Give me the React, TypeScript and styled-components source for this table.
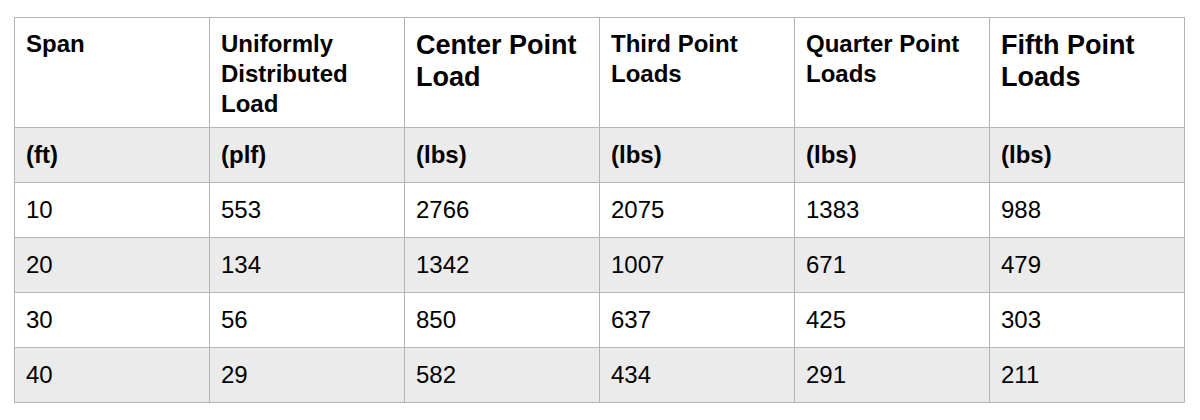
import React from "react";
import styled, { createGlobalStyle } from "styled-components";

const Global = createGlobalStyle`
  html, body {
    margin: 0;
    padding: 0;
    background: #ffffff;
  }
  body {
    font-family: "Liberation Sans", Arial, Helvetica, sans-serif;
    color: #000000;
  }
`;

const Page = styled.div`
  padding: 17px 15px 0 14px;
`;

const Table = styled.table`
  border-collapse: collapse;
  table-layout: fixed;
  width: 1171px;
  font-family: "Liberation Sans", Arial, Helvetica, sans-serif;
`;

const Col = styled.col`
  width: 195px;
`;

const Row = styled.tr<{ $shaded?: boolean; $tall?: boolean }>`
  height: ${(p) => (p.$tall ? "110px" : "55px")};
  background: ${(p) => (p.$shaded ? "#ebebeb" : "#ffffff")};
`;

const HeadCell = styled.th<{ $big?: boolean }>`
  border: 1px solid #b4b4b4;
  padding: 11px 11px 0;
  text-align: left;
  vertical-align: top;
  font-weight: 700;
  font-size: ${(p) => (p.$big ? "27px" : "24px")};
  line-height: ${(p) => (p.$big ? "32.4px" : "30px")};
  color: #000;
`;

const UnitCell = styled.td`
  border: 1px solid #b4b4b4;
  padding: 0 11px;
  vertical-align: middle;
  font-weight: 700;
  font-size: 24px;
  line-height: 1.2;
  color: #000;
`;

const Cell = styled.td`
  border: 1px solid #b4b4b4;
  padding: 0 11px;
  vertical-align: middle;
  font-weight: 400;
  font-size: 24px;
  line-height: 1.2;
  color: #000;
`;

const headers: { label: string; big?: boolean }[] = [
  { label: "Span" },
  { label: "Uniformly Distributed Load" },
  { label: "Center Point Load", big: true },
  { label: "Third Point Loads" },
  { label: "Quarter Point Loads" },
  { label: "Fifth Point Loads", big: true },
];

const units = ["(ft)", "(plf)", "(lbs)", "(lbs)", "(lbs)", "(lbs)"];

const rows: string[][] = [
  ["10", "553", "2766", "2075", "1383", "988"],
  ["20", "134", "1342", "1007", "671", "479"],
  ["30", "56", "850", "637", "425", "303"],
  ["40", "29", "582", "434", "291", "211"],
];

export default function App() {
  return (
    <>
      <Global />
      <Page>
        <Table>
          <colgroup>
            {headers.map((h) => (
              <Col key={h.label} />
            ))}
          </colgroup>
          <thead>
            <Row $tall>
              {headers.map((h) => (
                <HeadCell key={h.label} $big={h.big}>
                  {h.label}
                </HeadCell>
              ))}
            </Row>
          </thead>
          <tbody>
            <Row $shaded>
              {units.map((u, i) => (
                <UnitCell key={i}>{u}</UnitCell>
              ))}
            </Row>
            {rows.map((r, ri) => (
              <Row key={ri} $shaded={ri % 2 === 1}>
                {r.map((v, ci) => (
                  <Cell key={ci}>{v}</Cell>
                ))}
              </Row>
            ))}
          </tbody>
        </Table>
      </Page>
    </>
  );
}
